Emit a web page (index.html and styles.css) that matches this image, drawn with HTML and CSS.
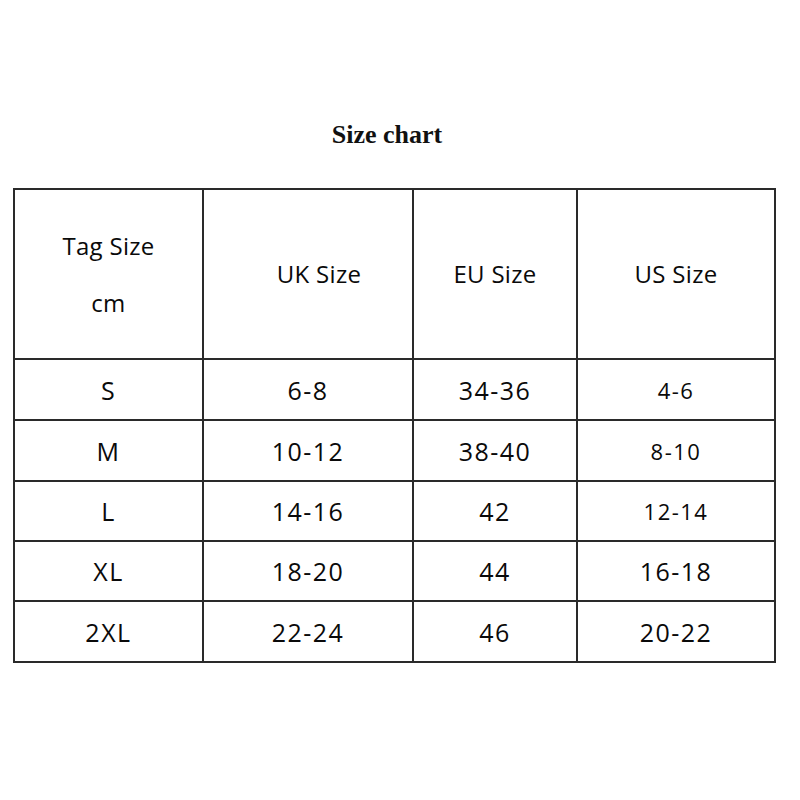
FILE: index.html
```html
<!DOCTYPE html>
<html>
<head>
<meta charset="utf-8">
<link rel="stylesheet" href="styles.css">
</head>
<body>
<h1 class="title">Size chart</h1>
<table class="chart">
  <colgroup>
    <col class="c1"><col class="c2"><col class="c3"><col class="c4">
  </colgroup>
  <tr class="head">
    <td class="tag">Tag Size<br>cm</td>
    <td class="uk">UK Size</td>
    <td>EU Size</td>
    <td>US Size</td>
  </tr>
  <tr><td>S</td><td>6-8</td><td>34-36</td><td class="sm">4-6</td></tr>
  <tr><td>M</td><td>10-12</td><td>38-40</td><td class="sm">8-10</td></tr>
  <tr class="short"><td>L</td><td>14-16</td><td>42</td><td class="sm">12-14</td></tr>
  <tr class="short"><td>XL</td><td>18-20</td><td>44</td><td>16-18</td></tr>
  <tr><td>2XL</td><td>22-24</td><td>46</td><td>20-22</td></tr>
</table>
</body>
</html>
```
FILE: styles.css
```css
html, body {
  margin: 0;
  padding: 0;
  background: #fff;
}
.title {
  margin: 0;
  padding-top: 120px;
  padding-right: 26px;
  font-family: "Liberation Serif", serif;
  font-weight: bold;
  font-size: 26px;
  line-height: 30px;
  text-align: center;
  color: #111;
}
.chart {
  margin: 38px 0 0 13px;
  border-collapse: collapse;
  table-layout: fixed;
  width: 761px;
  font-family: "Open Sans", sans-serif;
  font-size: 25px;
  color: #0a0a0a;
}
.c1 { width: 189px; }
.c2 { width: 210px; }
.c3 { width: 164px; }
.c4 { width: 198px; }
.chart td {
  border: 2px solid #2a2a2a;
  text-align: center;
  vertical-align: middle;
  height: 59px;
  padding: 0;
  letter-spacing: 1.5px;
  line-height: 34px;
}
.chart .short td {
  height: 58px;
}
.chart .head td {
  height: 168px;
  font-size: 24px;
  letter-spacing: 0.3px;
}
.chart .head td.tag {
  line-height: 57px;
}
.chart .head td.uk {
  padding-left: 22px;
}
.chart td.sm {
  font-size: 22px;
  letter-spacing: 1.5px;
}
```
